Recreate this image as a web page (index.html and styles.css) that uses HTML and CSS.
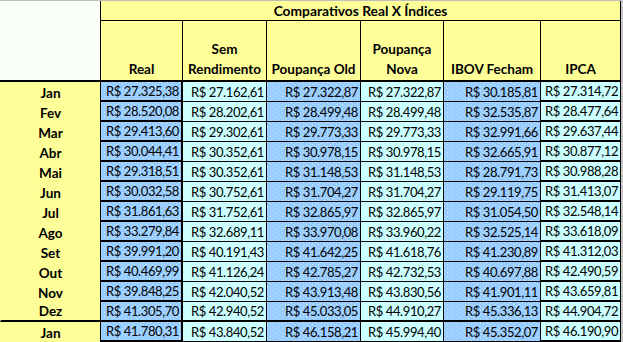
FILE: index.html
```html
<!DOCTYPE html>
<html lang="pt-BR">
<head>
<meta charset="utf-8">
<title>Comparativos Real X Índices</title>
<link rel="stylesheet" href="styles.css">
</head>
<body>
<div class="frame">
<table class="sheet">
<colgroup>
<col class="c-month"><col class="c-real"><col class="c-sem"><col class="c-pold"><col class="c-pnova"><col class="c-ibov"><col class="c-ipca">
</colgroup>
<thead>
<tr class="r-title"><th class="blank" rowspan="2"></th><th class="title" colspan="6">Comparativos Real X Índices</th></tr>
<tr class="r-head"><th>Real</th><th>Sem<br>Rendimento</th><th>Poupança Old</th><th>Poupança<br>Nova</th><th>IBOV Fecham</th><th>IPCA</th></tr>
</thead>
<tbody>
<tr><th class="month">Jan</th><td class="real">R$ 27.325,38</td><td class="cyan">R$ 27.162,61</td><td class="blue">R$ 27.322,87</td><td class="cyan">R$ 27.322,87</td><td class="blue">R$ 30.185,81</td><td class="cyan ipca">R$ 27.314,72</td></tr>
<tr><th class="month">Fev</th><td class="real">R$ 28.520,08</td><td class="cyan">R$ 28.202,61</td><td class="blue">R$ 28.499,48</td><td class="cyan">R$ 28.499,48</td><td class="blue">R$ 32.535,87</td><td class="cyan ipca">R$ 28.477,64</td></tr>
<tr><th class="month">Mar</th><td class="real">R$ 29.413,60</td><td class="cyan">R$ 29.302,61</td><td class="blue">R$ 29.773,33</td><td class="cyan">R$ 29.773,33</td><td class="blue">R$ 32.991,66</td><td class="cyan ipca">R$ 29.637,44</td></tr>
<tr><th class="month">Abr</th><td class="real">R$ 30.044,41</td><td class="cyan">R$ 30.352,61</td><td class="blue">R$ 30.978,15</td><td class="cyan">R$ 30.978,15</td><td class="blue">R$ 32.665,91</td><td class="cyan ipca">R$ 30.877,12</td></tr>
<tr><th class="month">Mai</th><td class="real">R$ 29.318,51</td><td class="cyan">R$ 30.352,61</td><td class="blue">R$ 31.148,53</td><td class="cyan">R$ 31.148,53</td><td class="blue">R$ 28.791,73</td><td class="cyan ipca">R$ 30.988,28</td></tr>
<tr><th class="month">Jun</th><td class="real">R$ 30.032,58</td><td class="cyan">R$ 30.752,61</td><td class="blue">R$ 31.704,27</td><td class="cyan">R$ 31.704,27</td><td class="blue">R$ 29.119,75</td><td class="cyan ipca">R$ 31.413,07</td></tr>
<tr><th class="month">Jul</th><td class="real">R$ 31.861,63</td><td class="cyan">R$ 31.752,61</td><td class="blue">R$ 32.865,97</td><td class="cyan">R$ 32.865,97</td><td class="blue">R$ 31.054,50</td><td class="cyan ipca">R$ 32.548,14</td></tr>
<tr><th class="month">Ago</th><td class="real">R$ 33.279,84</td><td class="cyan">R$ 32.689,11</td><td class="blue">R$ 33.970,08</td><td class="cyan">R$ 33.960,22</td><td class="blue">R$ 32.525,14</td><td class="cyan ipca">R$ 33.618,09</td></tr>
<tr><th class="month">Set</th><td class="real">R$ 39.991,20</td><td class="cyan">R$ 40.191,43</td><td class="blue">R$ 41.642,25</td><td class="cyan">R$ 41.618,76</td><td class="blue">R$ 41.230,89</td><td class="cyan ipca">R$ 41.312,03</td></tr>
<tr><th class="month">Out</th><td class="real">R$ 40.469,99</td><td class="cyan">R$ 41.126,24</td><td class="blue">R$ 42.785,27</td><td class="cyan">R$ 42.732,53</td><td class="blue">R$ 40.697,88</td><td class="cyan ipca">R$ 42.490,59</td></tr>
<tr><th class="month">Nov</th><td class="real">R$ 39.848,25</td><td class="cyan">R$ 42.040,52</td><td class="blue">R$ 43.913,48</td><td class="cyan">R$ 43.830,56</td><td class="blue">R$ 41.901,11</td><td class="cyan ipca">R$ 43.659,81</td></tr>
<tr class="dez"><th class="month">Dez</th><td class="real">R$ 41.305,70</td><td class="cyan">R$ 42.940,52</td><td class="blue">R$ 45.033,05</td><td class="cyan">R$ 44.910,27</td><td class="blue">R$ 45.336,13</td><td class="cyan ipca">R$ 44.904,72</td></tr>
<tr><th class="month">Jan</th><td class="real">R$ 41.780,31</td><td class="cyan">R$ 43.840,52</td><td class="blue">R$ 46.158,21</td><td class="cyan">R$ 45.994,40</td><td class="blue">R$ 45.352,07</td><td class="cyan ipca">R$ 46.190,90</td></tr>
</tbody>
</table>
</div>
</body>
</html>
```
FILE: styles.css
```css
* { box-sizing: border-box; }
html, body { margin: 0; padding: 0; }
body {
  background: #ffffff;
  font-family: Lato, "Open Sans", sans-serif;
  color: #000;
  width: 623px;
  height: 342px;
  overflow: hidden;
}
.frame {
  width: 623px;
  border-top: 1px solid #c0c0c0;
  border-right: 2px solid #c8c8c8;
}
.sheet {
  border-collapse: separate;
  border-spacing: 0;
  table-layout: fixed;
  width: 621px;
}
.c-month { width: 101px; }
.c-real { width: 82px; }
.c-sem { width: 84px; }
.c-pold { width: 94px; }
.c-pnova { width: 83px; }
.c-ibov { width: 97px; }
.c-ipca { width: 80px; }

.sheet th, .sheet td {
  padding: 0;
  border: 0;
  border-right: 1px solid #000;
  border-bottom: 1px solid #000;
  white-space: nowrap;
}
.blank {
  background: #fbfff9;
  border-left: 1px solid #c0c0c0;
  border-bottom: 2px solid #000 !important;
}
.title {
  background: #ffff99;
  height: 20px;
  font-size: 13.8px;
  font-weight: 700;
  line-height: 18px;
  text-align: center;
  vertical-align: bottom;
}
.r-head th {
  background: #ffff99;
  height: 61px;
  border-bottom: 2px solid #000;
  font-size: 13.5px;
  font-weight: 700;
  line-height: 20px;
  text-align: center;
  vertical-align: bottom;
  padding-bottom: 1px;
}
.sheet .month {
  background: #ffff99;
  border-left: 1px solid #ffff99;
  border-bottom: 0;
  font-size: 13.5px;
  font-weight: 700;
  text-align: center;
  vertical-align: bottom;
  line-height: 17px;
  height: 20px;
}
.sheet td {
  height: 20px;
  font-size: 13px;
  letter-spacing: -0.4px;
  line-height: 17px;
  text-align: right;
  vertical-align: bottom;
  padding-right: 2px;
}
.cyan { background: #ccffff; }
.blue, .real {
  background-color: #99ccff;
  background-image:
    radial-gradient(circle at 0.5px 0.5px, #c4e6ff 0.6px, transparent 0.7px),
    radial-gradient(circle at 0.5px 0.5px, #c4e6ff 0.6px, transparent 0.7px);
  background-size: 6px 4px;
  background-position: 0 0, 3px 2px;
}
.sheet td.real {
  border-bottom-width: 2px;
  border-right-width: 2px;
}
.sheet td.ipca { border-bottom-width: 2px; }
.sheet tr.dez > * { border-bottom: 2px solid #000; }
```
